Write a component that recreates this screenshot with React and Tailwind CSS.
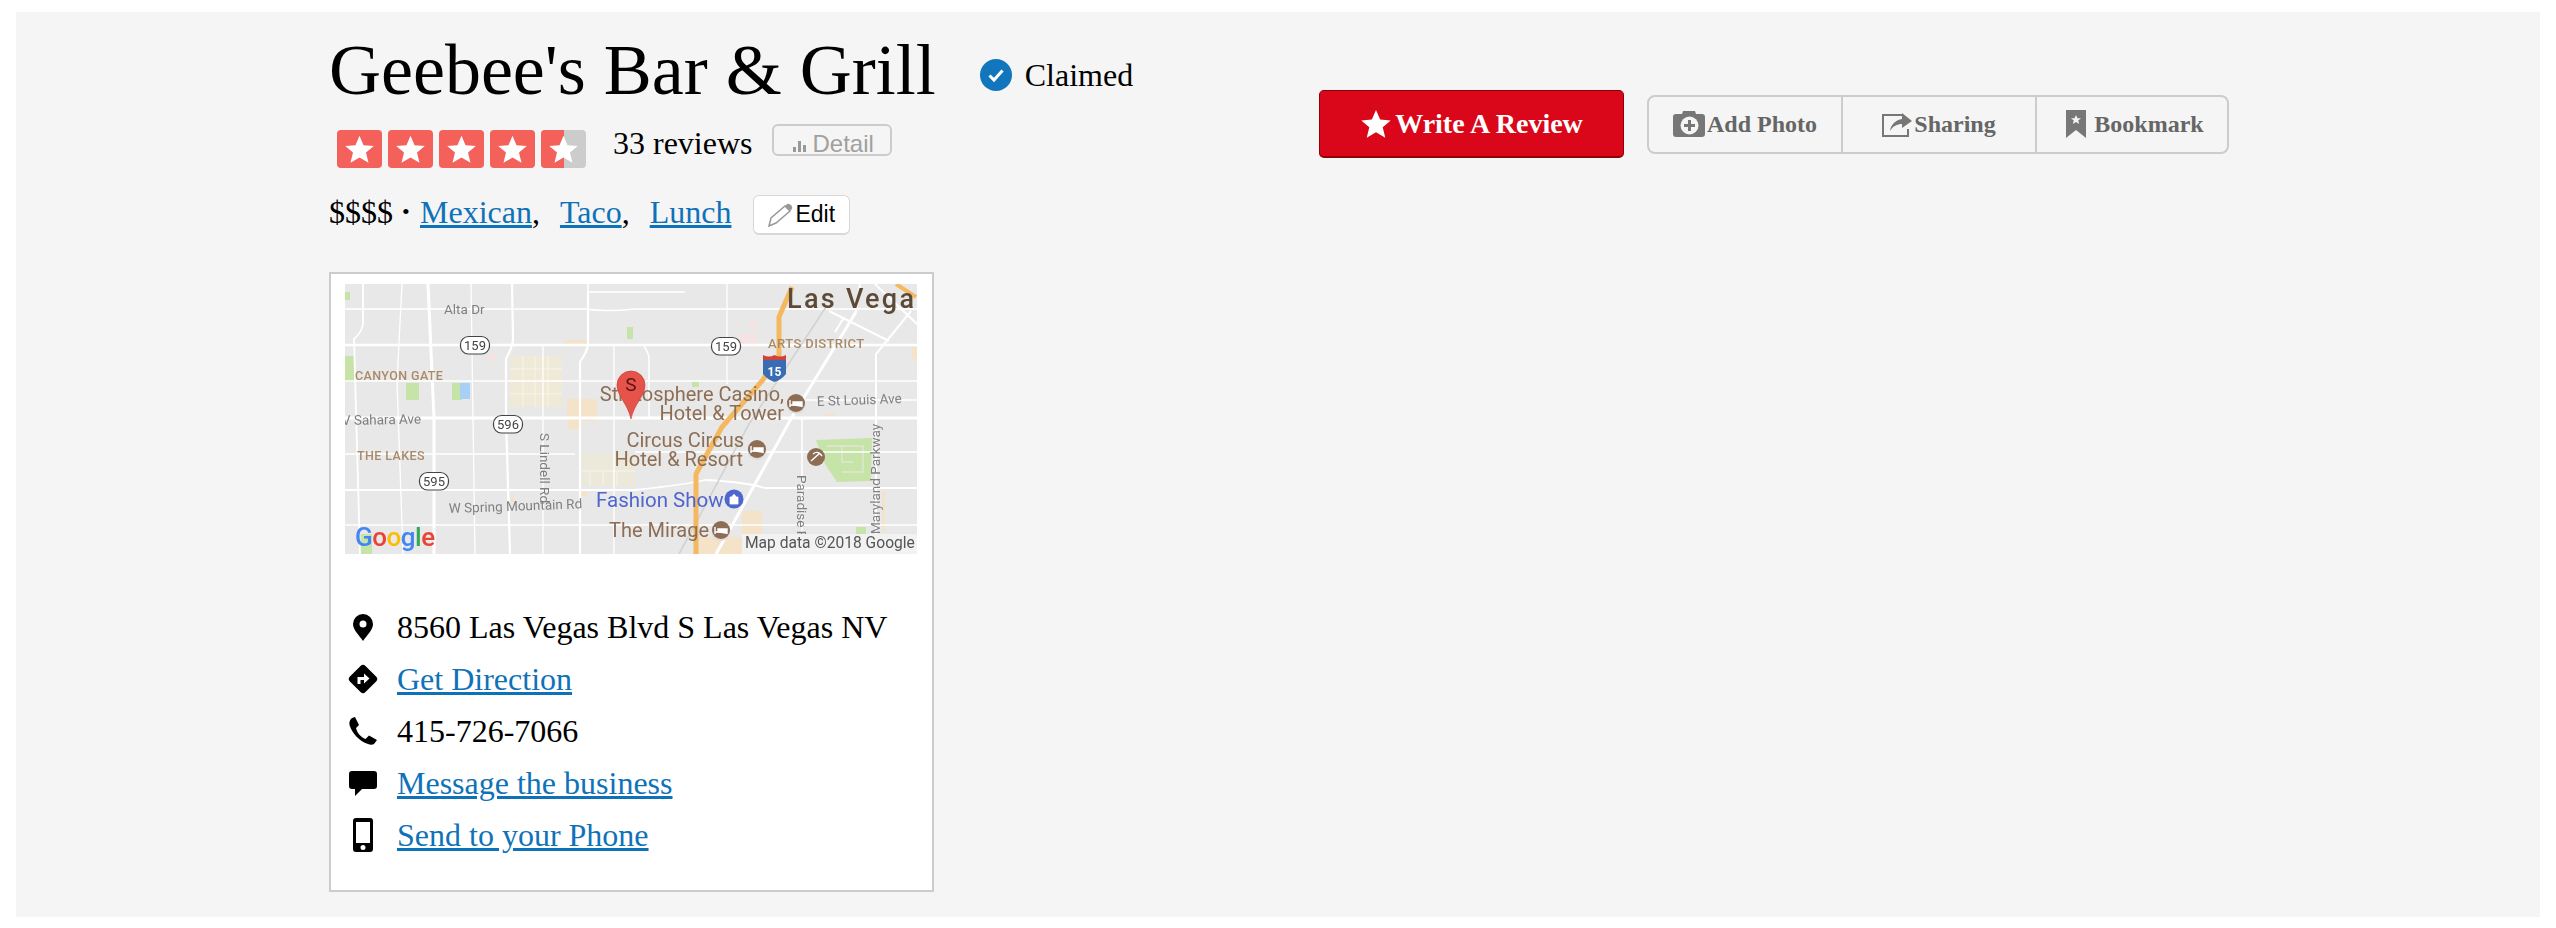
import React from 'react';

const STAR = '50,6 63,36 96,39 71,60 79,93 50,76 21,93 29,60 4,39 37,36';

function StarBox({ half }) {
  return (
    <div className={half ? 'relative flex h-[38px] w-[45px] items-center justify-center overflow-hidden rounded bg-[#ccc]' : 'relative flex h-[38px] w-[45px] items-center justify-center overflow-hidden rounded bg-[#f4605a]'}>
      {half && <div className="absolute inset-y-0 left-0 w-[23px] bg-[#f4605a]" />}
      <svg viewBox="0 0 100 100" className="relative h-[31px] w-[31px]">
        <polygon points={STAR} fill="#fff" />
      </svg>
    </div>
  );
}

function Shield({ x, y, label }) {
  return (
    <g>
      <rect x={x - 14.5} y={y - 8.5} width="29" height="17.5" rx="8" fill="#fff" stroke="#444" strokeWidth="1.2" />
      <text x={x} y={y + 5} textAnchor="middle" fontSize="13" fill="#444">{label}</text>
    </g>
  );
}

function Hotel({ x, y }) {
  return (
    <g>
      <circle cx={x} cy={y + 1.5} r="9.5" fill="#ddd" />
      <circle cx={x} cy={y} r="9" fill="#8d6e55" />
      <path d={`M${x - 6} ${y - 3}V${y + 4}M${x - 6} ${y + 2}H${x + 6}V${y + 4}M${x - 3} ${y - 1}H${x + 6}V${y + 2}H${x - 3}Z`} stroke="#fff" strokeWidth="1.4" fill="#fff" />
    </g>
  );
}

function MapPicture() {
  const label = 'fill-[#808080]';
  return (
    <svg viewBox="0 0 572 270" className="block h-[270px] w-[572px] bg-[#e8e8e8] font-['Roboto',sans-serif] blur-[0.5px]">
      {/* parks, water and blocks */}
      <g fill="#c6e3a8">
        <rect x="0" y="72" width="9" height="26" />
        <rect x="0" y="8" width="5" height="8" />
        <rect x="61" y="99" width="13" height="17" />
        <rect x="107" y="99" width="10" height="17" />
        <rect x="282" y="43" width="6" height="12" />
        <rect x="347" y="98" width="7" height="5" />
        <rect x="511" y="243" width="10" height="7" />
        <rect x="15" y="250" width="12" height="20" />
        <polygon points="471,156 527,154 526,197 492,198 480,180" />
      </g>
      <rect x="115" y="99" width="10" height="16" fill="#a8d0f4" />
      <path d="M482 162H518V188H497M497 162V178H508" stroke="#dfe8d2" strokeWidth="1.4" fill="none" />
      <rect x="165" y="72" width="52" height="51" fill="#efe9d8" />
      <rect x="237" y="170" width="53" height="32" fill="#ece8da" />
      <path d="M165 85H217M165 97H217M165 110H217M178 72V123M190 72V123M203 72V123M237 187H290M245 187V202M258 187V202M272 187V202" stroke="#f6f4ec" strokeWidth="1" fill="none" />
      <g fill="#f4e3c8">
        <rect x="222" y="115" width="30" height="22" />
        <rect x="223" y="135" width="12" height="10" />
        <rect x="220" y="56" width="22" height="5" />
        <rect x="397" y="227" width="20" height="26" />
        <rect x="354" y="253" width="43" height="17" />
        <rect x="567" y="63" width="5" height="12" />
        <rect x="537" y="207" width="3" height="40" />
        <rect x="234" y="208" width="8" height="4" />
        <rect x="166" y="210" width="3" height="8" />
        <rect x="480" y="130" width="10" height="4" />
      </g>
      <rect x="404" y="37" width="8" height="8" fill="#f5e3e3" />
      <rect x="394" y="50" width="18" height="10" fill="#f5e3e3" />
      <rect x="143" y="70" width="8" height="6" fill="#f5e3e3" />
      {/* streets */}
      <g stroke="#fff" fill="none">
        <path d="M0 61H572" strokeWidth="2.6" />
        <path d="M0 134H572" strokeWidth="3.2" />
        <path d="M83 0L89 134V270" strokeWidth="3" />
        <path d="M167 0L168 55Q168 62 161 75V134L165 270" strokeWidth="2.2" />
        <path d="M243 8V60Q243 66 235 78V270" strokeWidth="2.2" />
        <path d="M18 0V40Q17 48 9 55L15 270" strokeWidth="1.8" />
        <path d="M0 25H240Q260 28 290 25H572" strokeWidth="1.5" />
        <path d="M0 97H572" strokeWidth="1.5" />
        <path d="M0 170H230M290 168H572" strokeWidth="1.5" />
        <path d="M0 206H290Q345 200 360 196Q400 198 420 204H572" strokeWidth="1.8" />
        <path d="M0 241H572" strokeWidth="1.5" />
        <path d="M243 8H340M243 0V8" strokeWidth="1.5" />
        <path d="M57 0L52 97L58 270M126 0L130 270M198 62V270M269 62V270M382 0V100" strokeWidth="1.3" />
        <path d="M299 62Q305 70 304 80V134M457 133V270M457 116H572" strokeWidth="1.5" />
        <path d="M511 28L447 133L384 247L371 270" strokeWidth="3" />
        <path d="M515 0L511 28M484 27L544 57M498 35L490 48M566 27L531 70V270M530 0L572 40" strokeWidth="2" />
      </g>
      <path d="M481 23L404 140L334 270" stroke="#d2d2d2" strokeWidth="1.6" fill="none" />
      <path d="M447 3L434 33V73L417 97L377 143L351 190V270" stroke="#f4b860" strokeWidth="5" fill="none" />
      <path d="M551 0L571 13" stroke="#f4b860" strokeWidth="4" fill="none" />
      {/* labels */}
      <text x="99" y="30" fontSize="13.5" className={label}>Alta Dr</text>
      <text x="10" y="96" fontSize="12.5" fontWeight="500" letterSpacing="0.4" fill="#a98a68">CANYON GATE</text>
      <text x="12" y="176" fontSize="12.5" fontWeight="500" letterSpacing="0.4" fill="#a98a68">THE LAKES</text>
      <text x="423" y="64" fontSize="13" fontWeight="500" letterSpacing="0.4" fill="#a98a68">ARTS DISTRICT</text>
      <text x="-3" y="141" fontSize="13.5" className={label} transform="rotate(-1 -3 141)">V Sahara Ave</text>
      <text x="472" y="122" fontSize="13.5" className={label} transform="rotate(-2 472 122)">E St Louis Ave</text>
      <text x="104" y="229" fontSize="13.5" className={label} transform="rotate(-2 104 229)">W Spring Mountain Rd</text>
      <text x="0" y="0" fontSize="13.5" className={label} transform="translate(195 149) rotate(90)">S Lindell Rd</text>
      <text x="0" y="0" fontSize="13.5" className={label} transform="translate(452 191) rotate(90)">Paradise Rd</text>
      <text x="0" y="0" fontSize="13.5" className={label} transform="translate(535 250) rotate(-90)">Maryland Parkway</text>
      <text x="442" y="24" fontSize="27" fontWeight="500" letterSpacing="2.3" fill="#5b4a38">Las Vega</text>
      <g fontSize="20" fill="#8d6e55" textAnchor="end">
        <text x="439" y="117">Stratosphere Casino,</text>
        <text x="439" y="136">Hotel &amp; Tower</text>
        <text x="399" y="163">Circus Circus</text>
        <text x="398" y="182">Hotel &amp; Resort</text>
        <text x="364" y="253">The Mirage</text>
      </g>
      <text x="251" y="223" fontSize="20.5" fill="#4f66cf">Fashion Show</text>
      <Shield x={130} y={61} label="159" />
      <Shield x={381} y={62} label="159" />
      <Shield x={163} y={140} label="596" />
      <Shield x={89} y={197} label="595" />
      <path d="M418 76H441V90Q436 96 429.5 98Q423 96 418 90Z" fill="#3a6cb4" />
      <path d="M418 71Q424 74 429.5 71Q435 74 441 71V76H418Z" fill="#d0433a" />
      <text x="429.5" y="92" textAnchor="middle" fontSize="12" fontWeight="700" fill="#fff">15</text>
      <Hotel x={451} y={119} />
      <Hotel x={412} y={165} />
      <Hotel x={376} y={246} />
      <circle cx="471" cy="173" r="9" fill="#8d6e55" />
      <path d="M466 177L475 169M468 170Q473 166 477 172" stroke="#fff" strokeWidth="1.4" fill="none" />
      <circle cx="389" cy="215" r="9.5" fill="#4f66cf" />
      <path d="M385 213H393V220H385ZM387 213Q389 208 391 213" fill="#fff" stroke="#fff" strokeWidth="0.8" />
      {/* pin */}
      <path d="M286 135C283 120 272 112 272 101A14 14 0 0 1 300 101C300 112 289 120 286 135Z" fill="#e5534b" stroke="#c8352d" strokeWidth="0.6" />
      <text x="286" y="107" textAnchor="middle" fontSize="19" fill="#5a1510">S</text>
      {/* google */}
      <text x="10" y="262" fontSize="26" fontWeight="500" letterSpacing="-0.5">
        <tspan fill="#4285f4">G</tspan>
        <tspan fill="#ea4335">o</tspan>
        <tspan fill="#fbbc05">o</tspan>
        <tspan fill="#4285f4">g</tspan>
        <tspan fill="#34a853">l</tspan>
        <tspan fill="#ea4335">e</tspan>
      </text>
      <rect x="397" y="250" width="175" height="20" fill="#f2f2f2" />
      <text x="400" y="264" fontSize="15.6" fill="#555">Map data ©2018 Google</text>
    </svg>
  );
}

const linkCls = 'text-[#0f72b8] underline';

function InfoRow({ icon, children }) {
  return (
    <div className="flex h-[52px] items-center leading-[52px]">
      <div className="mr-[16px] flex w-[36px] shrink-0 items-center justify-center">{icon}</div>
      <div>{children}</div>
    </div>
  );
}

export default function App() {
  return (
    <div className="min-h-screen bg-white px-[16px] pt-[12px] font-['Liberation_Serif',serif] text-[32px] text-black">
      <div className="h-[905px] bg-[#f5f5f5] pl-[313px] pt-[22px]">
        <div className="flex items-start">
          <div className="w-[990px] shrink-0">
            {/* title */}
            <div className="flex items-start">
              <h1 className="text-[72px] leading-[72px]">Geebee's Bar &amp; Grill</h1>
              <div className="ml-[44px] mt-[23px] flex h-[36px] items-center leading-[36px]">
                <svg viewBox="0 0 32 32" className="h-[32px] w-[32px]">
                  <circle cx="16" cy="16" r="16" fill="#1276bd" />
                  <path d="M9.5 16.5L14 21L22.5 11.5" stroke="#fff" strokeWidth="3" fill="none" />
                </svg>
                <span className="ml-[13px]">Claimed</span>
              </div>
            </div>
            {/* rating */}
            <div className="mt-[18px] flex h-[44px] items-start">
              <div className="ml-[8px] mt-[6px] flex gap-[6px]">
                <StarBox />
                <StarBox />
                <StarBox />
                <StarBox />
                <StarBox half />
              </div>
              <span className="ml-[27px] mt-px leading-[36px]">33 reviews</span>
              <div className="ml-[19px] flex h-[32px] w-[120px] items-end overflow-hidden rounded-[6px] border-2 border-[#ccc] pl-[19px] font-['Liberation_Sans',sans-serif] text-[24px] leading-[26px] text-[#a0a0a0]">
                <svg viewBox="0 0 14 11" className="mb-[2px] mr-[6px] h-[11px] w-[14px] shrink-0">
                  <rect x="0" y="6" width="3" height="5" fill="#999" />
                  <rect x="5" y="0" width="3" height="11" fill="#999" />
                  <rect x="10" y="4" width="3" height="7" fill="#999" />
                </svg>
                <span className="-mb-[3px]">Detail</span>
              </div>
            </div>
            {/* categories */}
            <div className="mt-[27px] flex h-[40px] items-start">
              <div className="-mt-px flex leading-[36px]">
                <span>$$$$</span>
                <span className="ml-[9px] w-[18px] text-[22px]">•</span>
                <span><a className={linkCls}>Mexican</a>,</span>
                <a className={`ml-[20px] ${linkCls}`}>Taco</a>
                <span>,</span>
                <a className={`ml-[20px] ${linkCls}`}>Lunch</a>
              </div>
              <button className="ml-[22px] flex h-[40px] w-[97px] items-center rounded-[6px] border border-b-2 border-[#d8d8d8] bg-white pl-[14px] font-['Liberation_Sans',sans-serif] text-[23px] text-black">
                <svg viewBox="0 0 25 24" className="h-[24px] w-[25px] shrink-0">
                  <path d="M1 23L3 15L17 3L22 8L8 20Z" fill="none" stroke="#999" strokeWidth="1.5" />
                  <path d="M17 3L19 1Q21 0 23.5 2.5Q25 5 23.5 6.5L22 8Z" fill="#999" />
                </svg>
                <span className="ml-[2px]">Edit</span>
              </button>
            </div>
            {/* card */}
            <div className="mt-[37px] h-[620px] w-[605px] border-2 border-[#ccc] bg-white px-[14px] pt-[10px]">
              <MapPicture />
              <div className="mt-[47px]">
                <InfoRow icon={
                  <svg viewBox="0 0 20 27" className="h-[27px] w-[20px]">
                    <path fillRule="evenodd" d="M10 0A10 10 0 0 1 20 10C20 16 14 21 10 27C6 21 0 16 0 10A10 10 0 0 1 10 0ZM10 6.5A3.5 3.5 0 1 0 10 13.5A3.5 3.5 0 1 0 10 6.5Z" />
                  </svg>
                }>
                  8560 Las Vegas Blvd S Las Vegas NV
                </InfoRow>
                <InfoRow icon={
                  <svg viewBox="0 0 32 32" className="h-[32px] w-[32px]">
                    <rect x="5" y="5" width="22" height="22" rx="3.5" transform="rotate(45 16 16)" />
                    <path d="M10.5 21V14H17V10.5L22.5 15.5L17 20.5V17H13.5V21Z" fill="#fff" />
                  </svg>
                }>
                  <a className={linkCls}>Get Direction</a>
                </InfoRow>
                <InfoRow icon={
                  <svg viewBox="0 0 28 28" className="h-[28px] w-[28px]">
                    <path d="M6 0L10 8L7 11C8 16 12 20 16.5 22L20 18.5L28 23L25 27C23.5 28 21 28 19 27C10 24 3 16 0.5 8C0 5 1 2.5 3 1Z" />
                  </svg>
                }>
                  415-726-7066
                </InfoRow>
                <InfoRow icon={
                  <svg viewBox="0 0 28 25" className="h-[25px] w-[28px]">
                    <path d="M3 0H25A3 3 0 0 1 28 3V15A3 3 0 0 1 25 18H13L6 25V18H3A3 3 0 0 1 0 15V3A3 3 0 0 1 3 0Z" />
                  </svg>
                }>
                  <a className={linkCls}>Message the business</a>
                </InfoRow>
                <InfoRow icon={
                  <svg viewBox="0 0 20 34" className="h-[34px] w-[20px]">
                    <path fillRule="evenodd" d="M3 0H17A3 3 0 0 1 20 3V31A3 3 0 0 1 17 34H3A3 3 0 0 1 0 31V3A3 3 0 0 1 3 0ZM3 4V25H17V4ZM10 27A2.5 2.5 0 1 0 10 32A2.5 2.5 0 1 0 10 27Z" />
                  </svg>
                }>
                  <a className={linkCls}>Send to your Phone</a>
                </InfoRow>
              </div>
            </div>
          </div>
          {/* actions */}
          <div className="mt-[56px] flex h-[68px] items-center gap-[23px]">
            <button className="flex h-[68px] w-[305px] items-center justify-center rounded-[5px] border border-b-2 border-[#8d0005] bg-[#d90719] text-[28px] font-bold text-white">
              <svg viewBox="0 0 100 100" className="mr-[3px] h-[32px] w-[32px]">
                <polygon points={STAR} fill="#fff" />
              </svg>
              Write A Review
            </button>
            <div className="flex h-[59px] w-[582px] rounded-[8px] border-2 border-[#ccc] text-[24px] font-bold text-[#666]">
              <div className="flex w-[194px] items-center justify-center border-r-2 border-[#ccc]">
                <svg viewBox="0 0 32 26" className="mr-[2px] h-[26px] w-[32px]">
                  <path fill="#777" d="M3 3H9L10 0H22L23 3H29A3 3 0 0 1 32 6V23A3 3 0 0 1 29 26H3A3 3 0 0 1 0 23V6A3 3 0 0 1 3 3Z" />
                  <circle cx="16.5" cy="14.5" r="9" fill="#f5f5f5" />
                  <path fill="#777" d="M15 9H18V13H22V16H18V20H15V16H11V13H15Z" />
                </svg>
                Add Photo
              </div>
              <div className="flex w-[194px] items-center justify-center border-r-2 border-[#ccc]">
                <svg viewBox="0 0 30 25" className="mr-[2px] h-[25px] w-[30px]">
                  <path d="M20 3H1V24H26V17" fill="none" stroke="#777" strokeWidth="2" />
                  <path d="M8 19C9 12 14 8 20 7V1L30 9L20 16V12C15 12 11 14 8 19Z" fill="#777" />
                </svg>
                Sharing
              </div>
              <div className="flex flex-1 items-center justify-center pl-[6px]">
                <svg viewBox="0 0 20 28" className="mr-[8px] h-[28px] w-[20px]">
                  <path fillRule="evenodd" fill="#777" d="M0 0H20V28L10 20L0 28ZM10 5L11.5 8.2H15L12.2 10.4L13.2 14L10 12L6.8 14L7.8 10.4L5 8.2H8.5Z" />
                </svg>
                Bookmark
              </div>
            </div>
          </div>
        </div>
      </div>
    </div>
  );
}
